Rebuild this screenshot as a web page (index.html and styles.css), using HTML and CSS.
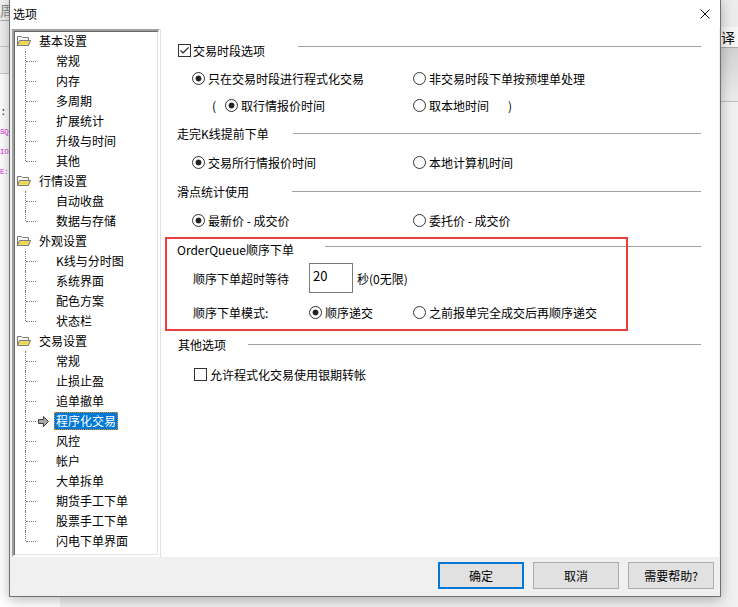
FILE: index.html
```html
<!DOCTYPE html>
<html lang="zh-CN">
<head>
<meta charset="utf-8">
<title>选项</title>
<link rel="stylesheet" href="styles.css">
</head>
<body>
<div class="desktop">
  <div class="app-left">
    <div class="al-bar1">周</div>
    <div class="al-bar2"></div>
    <div class="al-bar3"></div>
    <div class="al-lines">
      <div class="al-line dark">:</div>
      <div class="al-line mag">SQ</div>
      <div class="al-line mag">IO</div>
      <div class="al-line mag">E:</div>
    </div>
  </div>
  <div class="app-right">
    <div class="ar-bar1"></div>
    <div class="ar-bar2">翻译</div>
    <div class="ar-bar3"></div>
    <div class="ar-rest"></div>
  </div>
</div>

<div class="dialog">
  <div class="titlebar">
    <span class="title">选项</span>
    <svg class="close" width="10" height="10" viewBox="0 0 10 10"><path d="M0.5 0.5 L9.5 9.5 M9.5 0.5 L0.5 9.5" stroke="#111" stroke-width="1"/></svg>
  </div>

  <div class="body">
    <div class="tree">
      <div class="node top"><svg class="folder" width="14" height="12" viewBox="0 0 14 12"><path d="M0.5 1.5 H4.5 L5.5 2.5 H11.5 V10.5 H0.5 Z" fill="#f4f4f4" stroke="#7a7a7a"/><path d="M0.5 10.5 L2.5 5.5 H13.5 L11.5 10.5 Z" fill="#f2e36a" stroke="#7a7a7a"/><path d="M3 7 H12 M2.5 8.5 H11.5" stroke="#d8c23a" stroke-dasharray="1 1"/></svg><span class="label">基本设置</span></div>
      <div class="node child"><span class="label">常规</span></div>
      <div class="node child"><span class="label">内存</span></div>
      <div class="node child"><span class="label">多周期</span></div>
      <div class="node child"><span class="label">扩展统计</span></div>
      <div class="node child"><span class="label">升级与时间</span></div>
      <div class="node child last"><span class="label">其他</span></div>

      <div class="node top"><svg class="folder" width="14" height="12" viewBox="0 0 14 12"><path d="M0.5 1.5 H4.5 L5.5 2.5 H11.5 V10.5 H0.5 Z" fill="#f4f4f4" stroke="#7a7a7a"/><path d="M0.5 10.5 L2.5 5.5 H13.5 L11.5 10.5 Z" fill="#f2e36a" stroke="#7a7a7a"/><path d="M3 7 H12 M2.5 8.5 H11.5" stroke="#d8c23a" stroke-dasharray="1 1"/></svg><span class="label">行情设置</span></div>
      <div class="node child"><span class="label">自动收盘</span></div>
      <div class="node child last"><span class="label">数据与存储</span></div>

      <div class="node top"><svg class="folder" width="14" height="12" viewBox="0 0 14 12"><path d="M0.5 1.5 H4.5 L5.5 2.5 H11.5 V10.5 H0.5 Z" fill="#f4f4f4" stroke="#7a7a7a"/><path d="M0.5 10.5 L2.5 5.5 H13.5 L11.5 10.5 Z" fill="#f2e36a" stroke="#7a7a7a"/><path d="M3 7 H12 M2.5 8.5 H11.5" stroke="#d8c23a" stroke-dasharray="1 1"/></svg><span class="label">外观设置</span></div>
      <div class="node child"><span class="label">K线与分时图</span></div>
      <div class="node child"><span class="label">系统界面</span></div>
      <div class="node child"><span class="label">配色方案</span></div>
      <div class="node child last"><span class="label">状态栏</span></div>

      <div class="node top"><svg class="folder" width="14" height="12" viewBox="0 0 14 12"><path d="M0.5 1.5 H4.5 L5.5 2.5 H11.5 V10.5 H0.5 Z" fill="#f4f4f4" stroke="#7a7a7a"/><path d="M0.5 10.5 L2.5 5.5 H13.5 L11.5 10.5 Z" fill="#f2e36a" stroke="#7a7a7a"/><path d="M3 7 H12 M2.5 8.5 H11.5" stroke="#d8c23a" stroke-dasharray="1 1"/></svg><span class="label">交易设置</span></div>
      <div class="node child"><span class="label">常规</span></div>
      <div class="node child"><span class="label">止损止盈</span></div>
      <div class="node child"><span class="label">追单撤单</span></div>
      <div class="node child selected"><svg class="arrow" width="11" height="11" viewBox="0 0 11 11"><path d="M0.5 3.5 H5.5 V0.5 L10.5 5.5 L5.5 10.5 V7.5 H0.5 Z" fill="#a8a8a8" stroke="#3c3c3c"/></svg><span class="label">程序化交易</span></div>
      <div class="node child"><span class="label">风控</span></div>
      <div class="node child"><span class="label">帐户</span></div>
      <div class="node child"><span class="label">大单拆单</span></div>
      <div class="node child"><span class="label">期货手工下单</span></div>
      <div class="node child"><span class="label">股票手工下单</span></div>
      <div class="node child last"><span class="label">闪电下单界面</span></div>
    </div>

    <div class="panel">
      <div class="ghead h1">
        <span class="gtitle w1"><span class="check on"><svg width="11" height="11" viewBox="0 0 11 11"><path d="M1.5 5.5 L4 8 L9.5 2.5" fill="none" stroke="#222" stroke-width="1.1"/></svg></span>交易时段选项</span>
        <span class="rule up"></span>
      </div>
      <div class="opts r1">
        <span class="opt col1"><span class="radio on"></span>只在交易时段进行程式化交易</span>
        <span class="opt"><span class="radio"></span>非交易时段下单按预埋单处理</span>
      </div>
      <div class="opts r2">
        <span class="paren">(</span>
        <span class="opt col1b"><span class="radio on"></span>取行情报价时间</span>
        <span class="opt"><span class="radio"></span>取本地时间</span>
        <span class="paren-close">)</span>
      </div>

      <div class="ghead h2">
        <span class="gtitle w2">走完K线提前下单</span>
        <span class="rule"></span>
      </div>
      <div class="opts r3">
        <span class="opt col1"><span class="radio on"></span>交易所行情报价时间</span>
        <span class="opt"><span class="radio"></span>本地计算机时间</span>
      </div>

      <div class="ghead h3">
        <span class="gtitle w3">滑点统计使用</span>
        <span class="rule"></span>
      </div>
      <div class="opts r4">
        <span class="opt col1"><span class="radio on"></span>最新价 - 成交价</span>
        <span class="opt"><span class="radio"></span>委托价 - 成交价</span>
      </div>

      <div class="ghead h4">
        <span class="gtitle w4">OrderQueue顺序下单</span>
        <span class="rule up2"></span>
      </div>
      <div class="field-row">
        <span class="flabel">顺序下单超时等待</span>
        <span class="input">20</span>
        <span class="unit">秒(0无限)</span>
      </div>
      <div class="mode-row">
        <span class="flabel">顺序下单模式:</span>
        <span class="opt col2"><span class="radio on"></span>顺序递交</span>
        <span class="opt"><span class="radio"></span>之前报单完全成交后再顺序递交</span>
      </div>

      <div class="ghead h5">
        <span class="gtitle w5">其他选项</span>
        <span class="rule"></span>
      </div>
      <div class="check-row">
        <span class="check"></span>允许程式化交易使用银期转帐
      </div>

      <div class="mark"></div>
    </div>
  </div>

  <div class="footer">
    <button class="btn default">确定</button>
    <button class="btn">取消</button>
    <button class="btn">需要帮助?</button>
  </div>
</div>
</body>
</html>
```

FILE: styles.css
```css
* { box-sizing: border-box; }
html, body { margin: 0; padding: 0; }
body {
  width: 738px;
  height: 607px;
  overflow: hidden;
  position: relative;
  background: #ffffff;
  font-family: "Noto Sans CJK SC", "Noto Sans", sans-serif;
  font-size: 12px;
  color: #000;
}

/* background application */
.desktop {
  display: flex;
  justify-content: space-between;
  width: 738px;
  height: 607px;
  background: #f0f0f0;
}
.app-left { width: 60px; background: #fff; }
.al-bar1 { height: 21px; background: #f0f0f0; border-bottom: 1px solid #b0b0b0; color: #888; font-size: 14px; line-height: 21px; }
.al-bar2 { height: 26px; background: #f0f0f0; border-bottom: 1px solid #c8c8c8; }
.al-bar3 { height: 27px; background: #f0f0f0; border-bottom: 1px solid #c8c8c8; }
.al-lines { padding-top: 28px; }
.al-line { height: 20px; font-family: "Liberation Mono", monospace; font-size: 7.5px; line-height: 20px; letter-spacing: -0.3px; }
.al-line.dark { color: #333; font-size: 11px; }
.al-line.mag { color: #e020e0; }
.app-right { width: 60px; background: #f0f0f0; display: flex; flex-direction: column; }
.ar-bar1 { height: 27px; background: #ececec; }
.ar-bar2 { height: 21px; background: #f7f7f7; border-bottom: 1px solid #a8a8a8; font-size: 14px; line-height: 21px; text-align: right; padding-right: 3px; color: #111; }
.ar-bar3 { height: 54px; background: linear-gradient(#d2d2d2, #ececec); border-bottom: 1px solid #c0c0c0; }
.ar-rest { flex: 1; background: #f0f0f0; }

/* dialog window */
.dialog {
  position: absolute;
  left: 9px;
  top: -1px;
  width: 712px;
  height: 598px;
  border: 1px solid #707070;
  background: #f0f0f0;
  box-shadow: 0 3px 12px rgba(0, 0, 0, 0.28);
  display: flex;
  flex-direction: column;
}
.titlebar {
  height: 29px;
  flex: none;
  background: #fff;
  display: flex;
  align-items: center;
  justify-content: space-between;
  padding: 0 10px 1px 3px;
}
.title { font-size: 12px; line-height: 16px; }
.close { display: block; }

.body {
  height: 528px;
  flex: none;
  display: flex;
  padding-left: 2px;
  padding-right: 1px;
}

/* tree */
.tree {
  width: 148px;
  flex: none;
  background: #fff;
  border-style: solid;
  border-width: 2px;
  border-color: #a0a0a0 #ffffff #ffffff #a0a0a0;
  box-shadow: inset 1px 1px 0 #696969, inset -1px -1px 0 #e3e3e3;
  padding-top: 0;
  overflow: hidden;
}
.node {
  height: 20px;
  display: flex;
  align-items: center;
  position: relative;
  white-space: nowrap;
}
.node.top { padding-left: 3px; }
.folder { display: block; margin-right: 6px; flex: none; }
.node.child { padding-left: 40px; }
.node.child::before {
  content: "";
  position: absolute;
  left: 11px;
  top: 0;
  bottom: 0;
  border-left: 1px dotted #7a7a7a;
}
.node.child.last::before { bottom: 10px; }
.node.child::after {
  content: "";
  position: absolute;
  left: 12px;
  top: 10px;
  width: 10px;
  border-top: 1px dotted #7a7a7a;
}
.label {
  display: inline-block;
  padding: 0 1px;
  border: 1px solid transparent;
  line-height: 16px;
}
.node.selected { padding-left: 24px; }
.arrow { display: block; flex: none; margin-right: 5px; }
.node.selected .label {
  background: #0078d7;
  color: #fff;
  border: 1px dotted #e8901c;
}

/* right panel */
.panel {
  flex: 1;
  background: #fff;
  border-left: 1px solid #e3e3e3;
  position: relative;
  padding: 11px 18px 0 16px;
}
.ghead {
  height: 20px;
  display: flex;
  align-items: center;
  white-space: nowrap;
}
.gtitle { display: flex; align-items: center; flex: none; }
.w1 { width: 121px; padding-left: 1px; }
.w2 { width: 116px; }
.w3 { width: 115px; }
.w4 { width: 148px; }
.w5 { width: 71px; padding-left: 1px; }
.rule { flex: 1; height: 1px; background: #a0a0a0; }
.rule.up { margin-bottom: 8px; }
.rule.up2 { margin-bottom: 5px; }

.h2 { margin-top: 8px; }
.h3 { margin-top: 9px; }
.h4 { margin-top: 9px; }
.h5 { margin-top: 12px; }

.check {
  width: 13px;
  height: 13px;
  border: 1px solid #333;
  background: #fff;
  display: inline-flex;
  align-items: center;
  justify-content: center;
  flex: none;
  margin-right: 2px;
}
.check svg { display: block; }

.opts {
  height: 20px;
  display: flex;
  align-items: center;
  padding-left: 15px;
  white-space: nowrap;
}
.r1 { margin-top: 8px; }
.r2 { margin-top: 7px; padding-left: 35px; }
.r3 { margin-top: 9px; }
.r4 { margin-top: 9px; }
.opt { display: inline-flex; align-items: center; }
.col1 { width: 221px; }
.col1b { width: 188px; }
.col2 { width: 104px; }
.paren { width: 13px; }
.paren-close { margin-left: 19px; }

.radio {
  width: 13px;
  height: 13px;
  border: 1px solid #333;
  border-radius: 50%;
  background: #fff;
  margin-right: 3px;
  flex: none;
}
.radio.on { background: radial-gradient(circle, #222 0, #222 2.6px, #fff 3.3px); }

.field-row {
  height: 30px;
  margin-top: 4px;
  display: flex;
  align-items: center;
  padding-left: 16px;
  white-space: nowrap;
}
.flabel { width: 116px; flex: none; }
.input {
  width: 44px;
  height: 30px;
  border: 1px solid #7a7a7a;
  padding: 4px 3px 0;
  line-height: 16px;
  font-size: 13px;
  flex: none;
}
.unit { margin-left: 4px; }

.mode-row {
  height: 20px;
  margin-top: 9px;
  display: flex;
  align-items: center;
  padding-left: 16px;
  white-space: nowrap;
}

.check-row {
  height: 20px;
  margin-top: 10px;
  display: flex;
  align-items: center;
  padding-left: 17px;
}
.check-row .check { margin-right: 3px; }

/* red annotation box drawn over the group */
.mark {
  position: absolute;
  left: 4px;
  top: 208px;
  width: 463px;
  height: 94px;
  border: 2px solid #ee3b3b;
  pointer-events: none;
}

/* buttons */
.footer {
  flex: 1;
  display: flex;
  justify-content: flex-end;
  align-items: flex-start;
  gap: 9px;
  padding: 5px 6px 0 0;
}
.btn {
  width: 86px;
  height: 27px;
  background: #e1e1e1;
  border: 1px solid #adadad;
  font-family: "Noto Sans CJK SC", "Noto Sans", sans-serif;
  font-size: 12px;
  color: #000;
  padding: 0;
  line-height: 16px;
}
.btn.default { border: 2px solid #0078d7; }
```
